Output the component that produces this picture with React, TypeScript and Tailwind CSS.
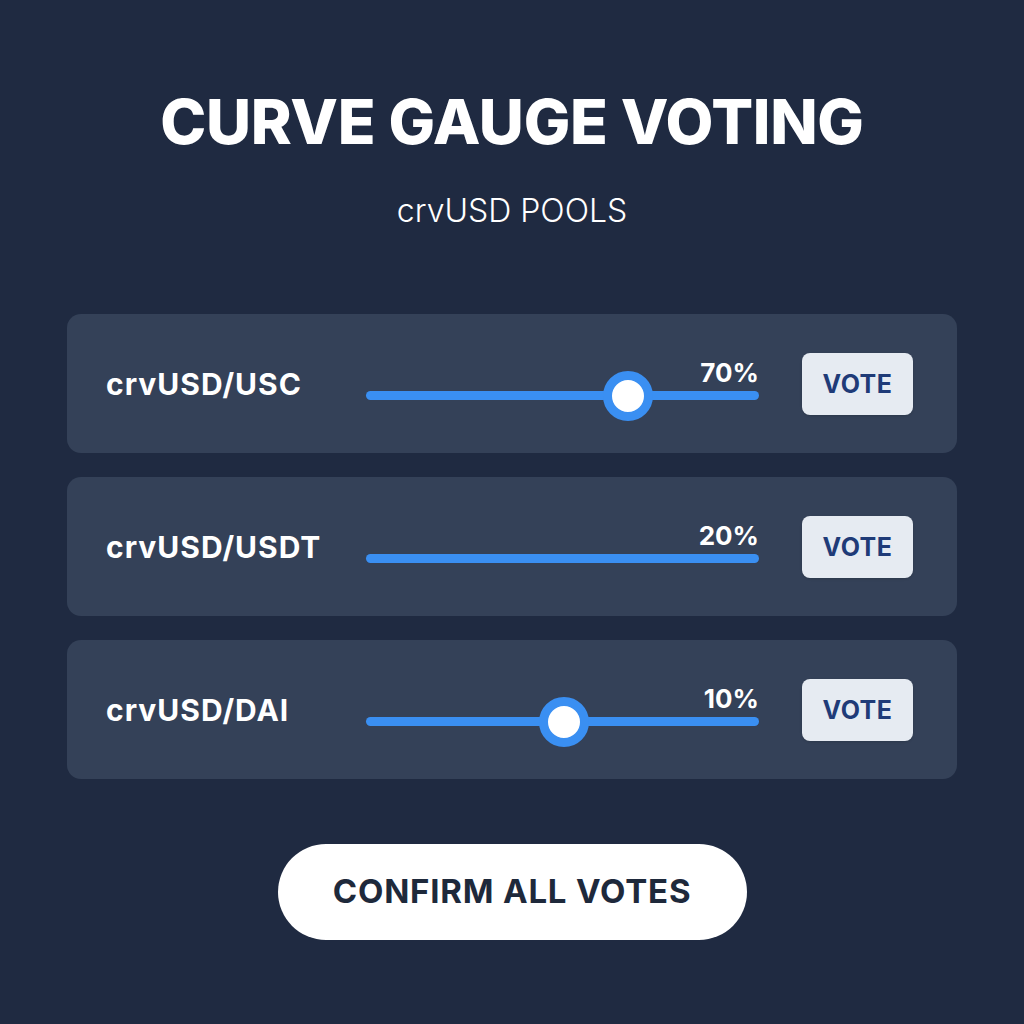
import React from "react";

type Pool = {
  name: string;
  pct: string;
  thumb?: number;
};

const pools: Pool[] = [
  { name: "crvUSD/USC", pct: "70%", thumb: 66.7 },
  { name: "crvUSD/USDT", pct: "20%" },
  { name: "crvUSD/DAI", pct: "10%", thumb: 50.4 },
];

function PoolRow({ pool }: { pool: Pool }) {
  return (
    <div className="flex h-[139px] w-[890px] items-center rounded-[14px] bg-[#344158] pl-[39px] pr-[44px]">
      <div className="w-[260px] text-[30px] font-bold leading-none tracking-[1px] text-white">
        {pool.name}
      </div>

      {/* slider */}
      <div className="mb-[7px] flex w-[393px] flex-col">
        <div className="h-[26px] text-right text-[26px] font-bold leading-none text-white">
          {pool.pct}
        </div>
        <div className="relative mt-[5px] h-[9px] rounded-full bg-[#3a8ff2]">
          {pool.thumb !== undefined && (
            <span
              className="absolute top-1/2 h-[50px] w-[50px] -translate-x-1/2 -translate-y-1/2 rounded-full border-[9px] border-[#3a8ff2] bg-white"
              style={{ left: `${pool.thumb}%` }}
            />
          )}
        </div>
      </div>

      <button className="ml-auto flex h-[62px] w-[111px] items-center justify-center rounded-[8px] bg-[#e6ebf2] pt-[3px] text-[25px] font-bold tracking-[0.5px] text-[#1f3b78] shadow-sm">
        VOTE
      </button>
    </div>
  );
}

export default function App() {
  return (
    <div
      className="flex h-[1024px] w-full flex-col items-center bg-[#1f2a41] pt-[91px]"
      style={{ fontFamily: "Inter, 'Open Sans', sans-serif" }}
    >
      <h1 className="text-[62px] font-extrabold leading-none tracking-[-0.3px] text-white">
        CURVE GAUGE VOTING
      </h1>
      <p className="mt-[42px] text-[32px] font-light leading-none text-white">
        crvUSD POOLS
      </p>

      <div className="mt-[87px] flex flex-col gap-[24px]">
        {pools.map((p) => (
          <PoolRow key={p.name} pool={p} />
        ))}
      </div>

      <button className="mt-[65px] flex h-[96px] w-[469px] items-center justify-center rounded-full bg-white text-[33px] font-bold tracking-[0.8px] text-[#1e293b]">
        CONFIRM ALL VOTES
      </button>
    </div>
  );
}
